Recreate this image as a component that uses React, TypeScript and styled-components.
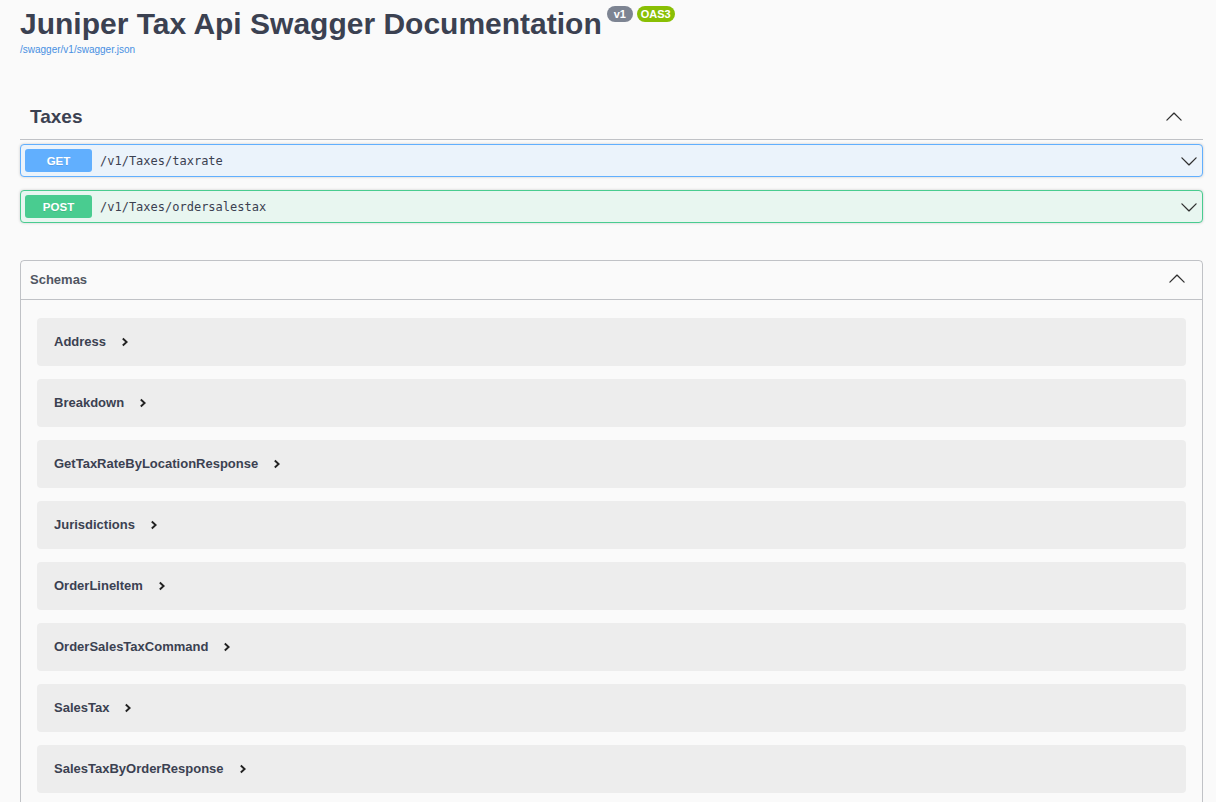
import React from "react";
import styled, { createGlobalStyle } from "styled-components";

const GlobalStyle = createGlobalStyle`
  html, body {
    margin: 0;
    padding: 0;
    background: #fafafa;
    overflow: hidden;
  }
  body {
    font-family: "Liberation Sans", Arial, sans-serif;
    color: #3b4151;
  }
  * { box-sizing: border-box; }
`;

const Wrapper = styled.div`
  padding: 0 13px 40px 20px;
`;

const Info = styled.div`
  display: flex;
  flex-direction: column;
`;

const TitleRow = styled.div`
  display: flex;
  align-items: flex-start;
`;

const Title = styled.h2`
  margin: 6px 0 0;
  font-size: 30px;
  line-height: 36px;
  font-weight: 700;
  color: #3b4151;
`;

const Badges = styled.div`
  display: flex;
  gap: 4px;
  margin: 6px 0 0 5px;
`;

const Badge = styled.span<{ $color: string }>`
  display: inline-block;
  background: ${(p) => p.$color};
  color: #fff;
  border-radius: 57px;
  font-size: 11px;
  font-weight: 700;
  line-height: 12px;
  padding: 2px 4px;
  min-width: 26px;
  text-align: center;
`;

const SpecLink = styled.a`
  display: block;
  margin-top: 2px;
  font-size: 10px;
  line-height: 12px;
  color: #4990e2;
  text-decoration: none;
`;

const TagSection = styled.section`
  margin-top: 39px;
`;

const TagHeader = styled.div`
  display: flex;
  align-items: center;
  justify-content: space-between;
  height: 45px;
  padding: 0 20px 0 10px;
  border-bottom: 1px solid rgba(59, 65, 81, 0.3);
`;

const TagTitle = styled.h3`
  margin: 0;
  font-size: 19px;
  font-weight: 700;
  color: #3b4151;
`;

const OpList = styled.div`
  display: flex;
  flex-direction: column;
  gap: 13px;
  padding-top: 4px;
`;

const Opblock = styled.div<{ $border: string; $bg: string }>`
  display: flex;
  align-items: center;
  border: 1px solid ${(p) => p.$border};
  background: ${(p) => p.$bg};
  border-radius: 4px;
  padding: 4px 4px;
  box-shadow: 0 0 3px rgba(0, 0, 0, 0.19);
`;

const Method = styled.span<{ $color: string }>`
  display: flex;
  align-items: center;
  justify-content: center;
  width: 67px;
  height: 23px;
  border-radius: 3px;
  background: ${(p) => p.$color};
  color: #fff;
  font-size: 11.5px;
  font-weight: 700;
  text-shadow: 0 1px 0 rgba(0, 0, 0, 0.1);
`;

const Path = styled.span`
  flex: 1;
  margin-left: 8px;
  font-family: "DejaVu Sans Mono", "Liberation Mono", monospace;
  font-size: 12px;
  color: #3b4151;
`;

const ChevronSvg = styled.svg<{ $up?: boolean }>`
  display: block;
  width: 18px;
  height: 18px;
  fill: #303030;
  transform: ${(p) => (p.$up ? "rotate(180deg)" : "none")};
`;

const Models = styled.section`
  margin-top: 37px;
  border: 1px solid rgba(59, 65, 81, 0.3);
  border-radius: 4px;
`;

const ModelsHeader = styled.div`
  display: flex;
  align-items: center;
  justify-content: space-between;
  height: 39px;
  padding: 0 16px 2px 9px;
  border-bottom: 1px solid rgba(59, 65, 81, 0.3);
`;

const ModelsTitle = styled.h4`
  margin: 0;
  font-size: 13px;
  font-weight: 700;
  color: #505662;
`;

const ModelsBody = styled.div`
  display: flex;
  flex-direction: column;
  gap: 13.5px;
  padding: 18px 16px 20px;
`;

const ModelRow = styled.div`
  display: flex;
  align-items: center;
  height: 47.5px;
  padding: 0 17px;
  border-radius: 4px;
  background: rgba(0, 0, 0, 0.05);
`;

const ModelName = styled.span`
  font-size: 13px;
  font-weight: 700;
  color: #3b4151;
`;

const ToggleSvg = styled.svg`
  display: block;
  margin-left: 15px;
  width: 8px;
  height: 10px;
`;

const Chevron = ({ up }: { up?: boolean }) => (
  <ChevronSvg $up={up} viewBox="0 0 20 20" aria-hidden="true">
    <path d="M17.418 6.109c.272-.268.709-.268.979 0s.271.701 0 .969l-7.908 7.83c-.27.268-.707.268-.979 0l-7.908-7.83c-.27-.268-.27-.701 0-.969.271-.268.709-.268.979 0L10 13.25l7.418-7.141z" />
  </ChevronSvg>
);

const Toggle = () => (
  <ToggleSvg viewBox="0 0 8 10" aria-hidden="true">
    <polyline points="1.8,1.5 5.6,5 1.8,8.5" fill="none" stroke="#222" strokeWidth="1.9" />
  </ToggleSvg>
);

const ops = [
  { method: "GET", path: "/v1/Taxes/taxrate", color: "#61affe", bg: "#ebf3fb" },
  { method: "POST", path: "/v1/Taxes/ordersalestax", color: "#49cc90", bg: "#e8f6f0" },
];

const schemas = [
  "Address",
  "Breakdown",
  "GetTaxRateByLocationResponse",
  "Jurisdictions",
  "OrderLineItem",
  "OrderSalesTaxCommand",
  "SalesTax",
  "SalesTaxByOrderResponse",
];

export default function App() {
  return (
    <>
      <GlobalStyle />
      <Wrapper>
        <Info>
          <TitleRow>
            <Title>Juniper Tax Api Swagger Documentation</Title>
            <Badges>
              <Badge $color="#7d8492">v1</Badge>
              <Badge $color="#89bf04">OAS3</Badge>
            </Badges>
          </TitleRow>
          <SpecLink href="#">/swagger/v1/swagger.json</SpecLink>
        </Info>

        <TagSection>
          <TagHeader>
            <TagTitle>Taxes</TagTitle>
            <Chevron up />
          </TagHeader>
          <OpList>
            {ops.map((op) => (
              <Opblock key={op.path} $border={op.color} $bg={op.bg}>
                <Method $color={op.color}>{op.method}</Method>
                <Path>{op.path}</Path>
                <Chevron />
              </Opblock>
            ))}
          </OpList>
        </TagSection>

        <Models>
          <ModelsHeader>
            <ModelsTitle>Schemas</ModelsTitle>
            <Chevron up />
          </ModelsHeader>
          <ModelsBody>
            {schemas.map((s) => (
              <ModelRow key={s}>
                <ModelName>{s}</ModelName>
                <Toggle />
              </ModelRow>
            ))}
          </ModelsBody>
        </Models>
      </Wrapper>
    </>
  );
}
